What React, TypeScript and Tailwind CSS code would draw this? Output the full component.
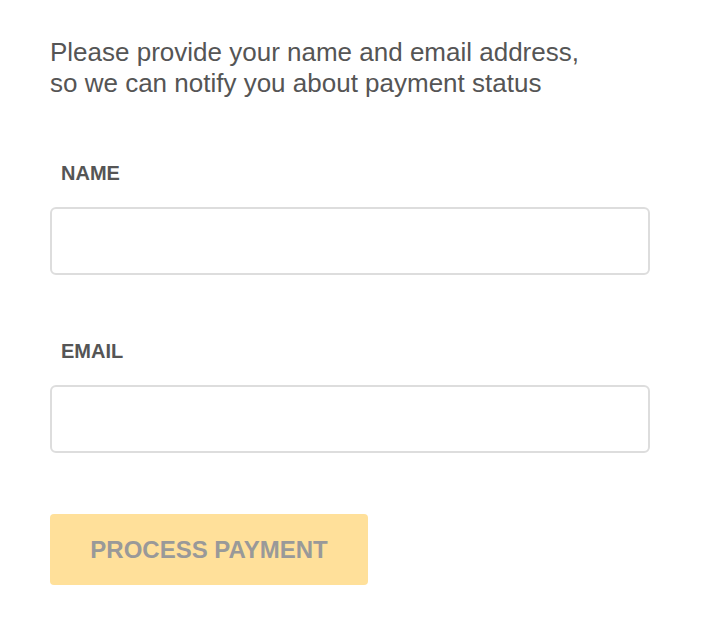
export default function App() {
  return (
    <div className="min-h-[632px] w-[702px] bg-white pl-[50px] pt-[37px] font-['Liberation_Sans',Arial,sans-serif] text-[#555]">
      <p className="text-[26px] leading-[31px]">
        Please provide your name and email address,
        <br />
        so we can notify you about payment status
      </p>

      <form className="mt-[64px] flex w-[600px] flex-col">
        <label className="pl-[11px] text-[20px] font-bold leading-[20px] text-[#555]">NAME</label>
        <input
          type="text"
          className="mt-[24px] h-[68px] w-[600px] rounded-[6px] border-2 border-[#ddd] px-4 text-lg outline-none"
        />

        <label className="mt-[66px] pl-[11px] text-[20px] font-bold leading-[20px] text-[#555]">EMAIL</label>
        <input
          type="email"
          className="mt-[24px] h-[68px] w-[600px] rounded-[6px] border-2 border-[#ddd] px-4 text-lg outline-none"
        />

        <button
          type="button"
          disabled
          className="mt-[61px] h-[71px] w-[318px] rounded-[4px] bg-[#ffe09a] text-[24px] font-bold text-[#999]"
        >
          PROCESS PAYMENT
        </button>
      </form>
    </div>
  );
}
